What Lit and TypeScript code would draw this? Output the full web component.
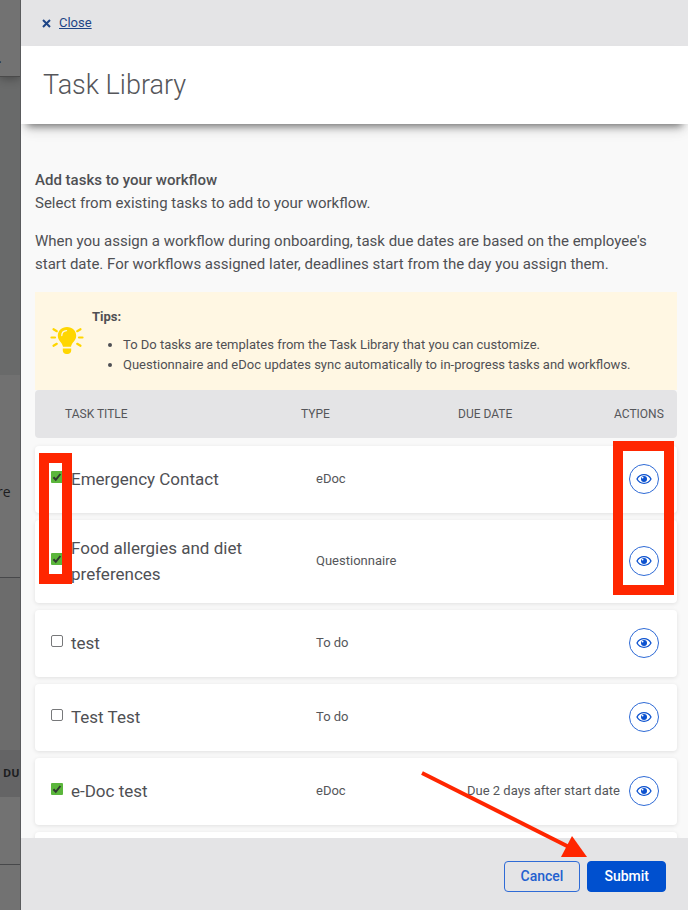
import { LitElement, html, css, svg } from "lit";
import { customElement, property, state } from "lit/decorators.js";

interface Task {
  title: string;
  type: string;
  due: string;
  selected: boolean;
}

@customElement("page-backdrop")
class PageBackdrop extends LitElement {
  static styles = css`
    :host {
      display: flex;
      flex-direction: column;
      flex: none;
      width: 20px;
      overflow: hidden;
      background: #6c6d6d;
      border-right: 1px solid #5a5b5d;
      font-family: "Open Sans", "Noto Sans", sans-serif;
      color: #1c1d1f;
      white-space: nowrap;
    }
    .bar {
      position: relative;
      height: 76px;
      flex: none;
      background: #727272;
      border-bottom: 1px solid #4a4a4a;
      box-shadow: 0 2px 10px rgba(0, 0, 0, 0.3);
      line-height: 116px;
      font-size: 14px;
      text-indent: -2px;
    }
    .hero {
      height: 298px;
      flex: none;
      background: #696a6a;
    }
    .card {
      height: 202px;
      flex: none;
      background: #717171;
      border-bottom: 1px solid #47484a;
      line-height: 234px;
      font-size: 14px;
      text-indent: -3px;
    }
    .gap {
      height: 172px;
      flex: none;
      background: #6c6c6c;
    }
    .head {
      height: 47px;
      flex: none;
      background: #646465;
      font-size: 11px;
      font-weight: 700;
      line-height: 46px;
      text-indent: 3px;
    }
    .row {
      height: 67px;
      flex: none;
      background: #727272;
      border-bottom: 1px solid #47484a;
    }
    .rest {
      flex: 1;
      background: #727272;
    }
  `;
  render() {
    return html`
      <div class="bar">.</div>
      <div class="hero"></div>
      <div class="card">re</div>
      <div class="gap"></div>
      <div class="head">DUE</div>
      <div class="row"></div>
      <div class="rest"></div>
    `;
  }
}

@customElement("task-table")
class TaskTable extends LitElement {
  @property({ attribute: false }) tasks: Task[] = [];

  static styles = css`
    :host {
      display: block;
      position: relative;
    }
    table,
    thead,
    tbody {
      display: flex;
      flex-direction: column;
    }
    table {
      gap: 8px;
    }
    tbody {
      gap: 7px;
    }
    tr {
      display: grid;
      align-items: center;
    }
    th,
    td {
      padding: 0;
      text-align: left;
    }
    thead tr {
      height: 48px;
      grid-template-columns: 236fr 157fr 156fr 48px;
      padding: 0 15px 0 30px;
      border-radius: 4px;
      background: #e4e4e6;
    }
    thead th {
      font-size: 12px;
      font-weight: 400;
      color: #55565a;
      white-space: nowrap;
    }
    tbody tr {
      min-height: 67px;
      box-sizing: border-box;
      grid-template-columns: 265fr 151fr 162fr 30px;
      padding: 15px 18px 16px 16px;
      border-radius: 4px;
      background: #fff;
      box-shadow: 0 1px 4px rgba(0, 0, 0, 0.1);
    }
    .title {
      display: flex;
      align-items: center;
      gap: 8px;
      padding-right: 32px;
      font-size: 17px;
      line-height: 26px;
      color: #4f5054;
    }
    .meta {
      font-size: 13px;
      line-height: 20px;
      color: #55565a;
      white-space: nowrap;
    }
    input {
      appearance: none;
      flex: none;
      width: 12px;
      height: 12px;
      margin: 0 0 4px;
      border: 1px solid #77787a;
      border-radius: 2px;
      background: #fff;
    }
    input:checked {
      border: 0;
      border-radius: 1px;
      background: #5bb63c
        url("data:image/svg+xml,%3Csvg xmlns='http://www.w3.org/2000/svg' viewBox='0 0 12 12'%3E%3Cpath d='M2.4 6.2 4.8 8.8 9.4 3' fill='none' stroke='%23303a30' stroke-width='2'/%3E%3C/svg%3E");
    }
    button {
      display: flex;
      align-items: center;
      justify-content: center;
      width: 30px;
      height: 30px;
      padding: 0;
      border: 1px solid #2f6bd6;
      border-radius: 50%;
      background: #fff;
      color: #0b51cf;
    }
    .mark {
      position: absolute;
      box-sizing: border-box;
      border: 10px solid #ff2600;
      pointer-events: none;
    }
    .mark-checks {
      left: 4px;
      top: 63px;
      width: 33px;
      height: 131px;
    }
    .mark-actions {
      right: 3px;
      top: 51px;
      width: 61px;
      height: 154px;
    }
  `;

  render() {
    return html`
      <table>
        <thead>
          <tr>
            <th scope="col">TASK TITLE</th>
            <th scope="col">TYPE</th>
            <th scope="col">DUE DATE</th>
            <th scope="col">ACTIONS</th>
          </tr>
        </thead>
        <tbody>
          ${this.tasks.map(
            (task, i) => html`
              <tr>
                <td class="title">
                  <input type="checkbox" id="task-${i}" .checked=${task.selected} />
                  <label for="task-${i}">${task.title}</label>
                </td>
                <td class="meta">${task.type}</td>
                <td class="meta">${task.due}</td>
                <td>
                  <button type="button" aria-label="Preview ${task.title}">
                    <svg width="16" height="12" viewBox="0 0 16 12" aria-hidden="true">
                      <path
                        d="M1 6C2.600 3 5.100 1.700 8 1.700S13.400 3 15 6C13.400 9 10.900 10.300 8 10.300S2.600 9 1 6Z"
                        fill="none"
                        stroke="currentColor"
                        stroke-width="1.3"
                      />
                      <circle cx="8" cy="6" r="3" fill="currentColor" />
                      <circle cx="6.600" cy="4.600" r="0.900" fill="#fff" />
                    </svg>
                  </button>
                </td>
              </tr>
            `
          )}
        </tbody>
      </table>
      <div class="mark mark-checks"></div>
      <div class="mark mark-actions"></div>
    `;
  }
}

@customElement("app-root")
class AppRoot extends LitElement {
  @state() private tasks: Task[] = [
    { title: "Emergency Contact", type: "eDoc", due: "", selected: true },
    { title: "Food allergies and diet preferences", type: "Questionnaire", due: "", selected: true },
    { title: "test", type: "To do", due: "", selected: false },
    { title: "Test Test", type: "To do", due: "", selected: false },
    { title: "e-Doc test", type: "eDoc", due: "Due 2 days after start date", selected: true },
    { title: "", type: "", due: "", selected: false },
  ];

  static styles = css`
    :host {
      display: flex;
      height: 100vh;
      overflow: hidden;
      font-family: Roboto, "Liberation Sans", sans-serif;
      color: #4f5054;
    }
    .drawer {
      position: relative;
      display: flex;
      flex-direction: column;
      flex: 1;
      min-width: 0;
      overflow: hidden;
      background: #f9f9f9;
    }
    .close {
      display: flex;
      align-items: center;
      flex: none;
      gap: 8px;
      height: 46px;
      padding: 0 21px;
      background: #e4e4e6;
      color: #1d4486;
    }
    .close a {
      color: inherit;
      font-size: 13px;
      line-height: 16px;
    }
    .heading {
      position: relative;
      display: flex;
      align-items: center;
      flex: none;
      height: 78px;
      padding: 0 22px;
      background: #fff;
      box-shadow: 0 8px 8px -6px rgba(0, 0, 0, 0.5), 0 8px 14px -4px rgba(0, 0, 0, 0.14);
    }
    h1 {
      margin: 0;
      font-size: 27px;
      font-weight: 300;
      line-height: 32px;
      color: #55565a;
    }
    .body {
      flex: 1;
      min-height: 0;
      overflow: hidden;
      padding: 44px 11px 0 14px;
    }
    h2,
    p {
      margin: 0;
      font-size: 15px;
      line-height: 23px;
    }
    h2 {
      font-weight: 500;
      line-height: 24px;
    }
    .intro {
      margin-bottom: 15px;
    }
    .tips {
      display: flex;
      align-items: center;
      gap: 8px;
      margin-top: 16px;
      padding: 15px;
      background: #fff7e3;
      font-size: 13px;
      line-height: 20px;
    }
    .tips strong {
      font-weight: 700;
    }
    .tips ul {
      margin: 8px 0 0;
      padding-left: 31px;
    }
    .footer {
      display: flex;
      align-items: center;
      justify-content: flex-end;
      flex: none;
      gap: 7px;
      height: 72px;
      box-sizing: border-box;
      padding: 4px 22px 0;
      background: #e4e4e6;
    }
    .footer button {
      height: 31px;
      padding: 0 16px;
      border: 1px solid #2f6bd6;
      border-radius: 4px;
      background: transparent;
      color: #2360cf;
      font: 500 14px/20px Roboto, sans-serif;
    }
    .footer .primary {
      border-color: #0050cf;
      background: #0050cf;
      color: #fff;
    }
    .arrow {
      position: absolute;
      right: 101px;
      bottom: 50px;
      pointer-events: none;
    }
  `;

  private bulb() {
    const rays = [
      "M1.500 11.500H5",
      "M29 11.500H32.500",
      "M3.500 3.200 6.800 5.200",
      "M30.500 3.200 27.200 5.200",
      "M3.500 19.800 6.800 17.800",
      "M30.500 19.800 27.200 17.800",
    ];
    return html`
      <svg width="34" height="30" viewBox="0 0 34 30" aria-hidden="true">
        <path
          d="M17 1C11.600 1 7.800 4.800 7.800 9.800c0 5 4.400 6.400 5.200 11h8c.8-4.600 5.200-6 5.200-11C26.200 4.800 22.400 1 17 1Z"
          fill="#ffd600"
        />
        <path
          d="M11.800 9.500C11.800 6.600 13.800 4.800 16.500 4.600"
          fill="none"
          stroke="#fff7e3"
          stroke-width="1.300"
          stroke-linecap="round"
        />
        <path d="M12.800 22.500h8.400v2c0 2.200-1.700 3.500-3.500 3.500h-1.400c-1.800 0-3.500-1.300-3.500-3.500Z" fill="#ffd600" />
        ${rays.map(
          (d) => svg`<path d=${d} stroke="#ffd600" stroke-width="2.200" stroke-linecap="round" />`
        )}
      </svg>
    `;
  }

  render() {
    return html`
      <page-backdrop></page-backdrop>
      <div class="drawer">
        <div class="close">
          <svg width="9" height="9" viewBox="0 0 9 9" aria-hidden="true">
            <path d="M1 1 8 8M8 1 1 8" stroke="currentColor" stroke-width="2" />
          </svg>
          <a href="#">Close</a>
        </div>
        <header class="heading"><h1>Task Library</h1></header>
        <main class="body">
          <h2>Add tasks to your workflow</h2>
          <p class="intro">Select from existing tasks to add to your workflow.</p>
          <p>
            When you assign a workflow during onboarding, task due dates are based on the employee's
            start date. For workflows assigned later, deadlines start from the day you assign them.
          </p>
          <div class="tips">
            ${this.bulb()}
            <div>
              <strong>Tips:</strong>
              <ul>
                <li>To Do tasks are templates from the Task Library that you can customize.</li>
                <li>Questionnaire and eDoc updates sync automatically to in-progress tasks and workflows.</li>
              </ul>
            </div>
          </div>
          <task-table .tasks=${this.tasks}></task-table>
        </main>
        <footer class="footer">
          <button type="button">Cancel</button>
          <button type="button" class="primary">Submit</button>
        </footer>
        <svg class="arrow" width="168" height="92" viewBox="0 0 168 92" aria-hidden="true">
          <path d="M3 5 150 79" stroke="#ff2600" stroke-width="4" />
          <path d="M168 89 153 68 142 89Z" fill="#ff2600" />
        </svg>
      </div>
    `;
  }
}
